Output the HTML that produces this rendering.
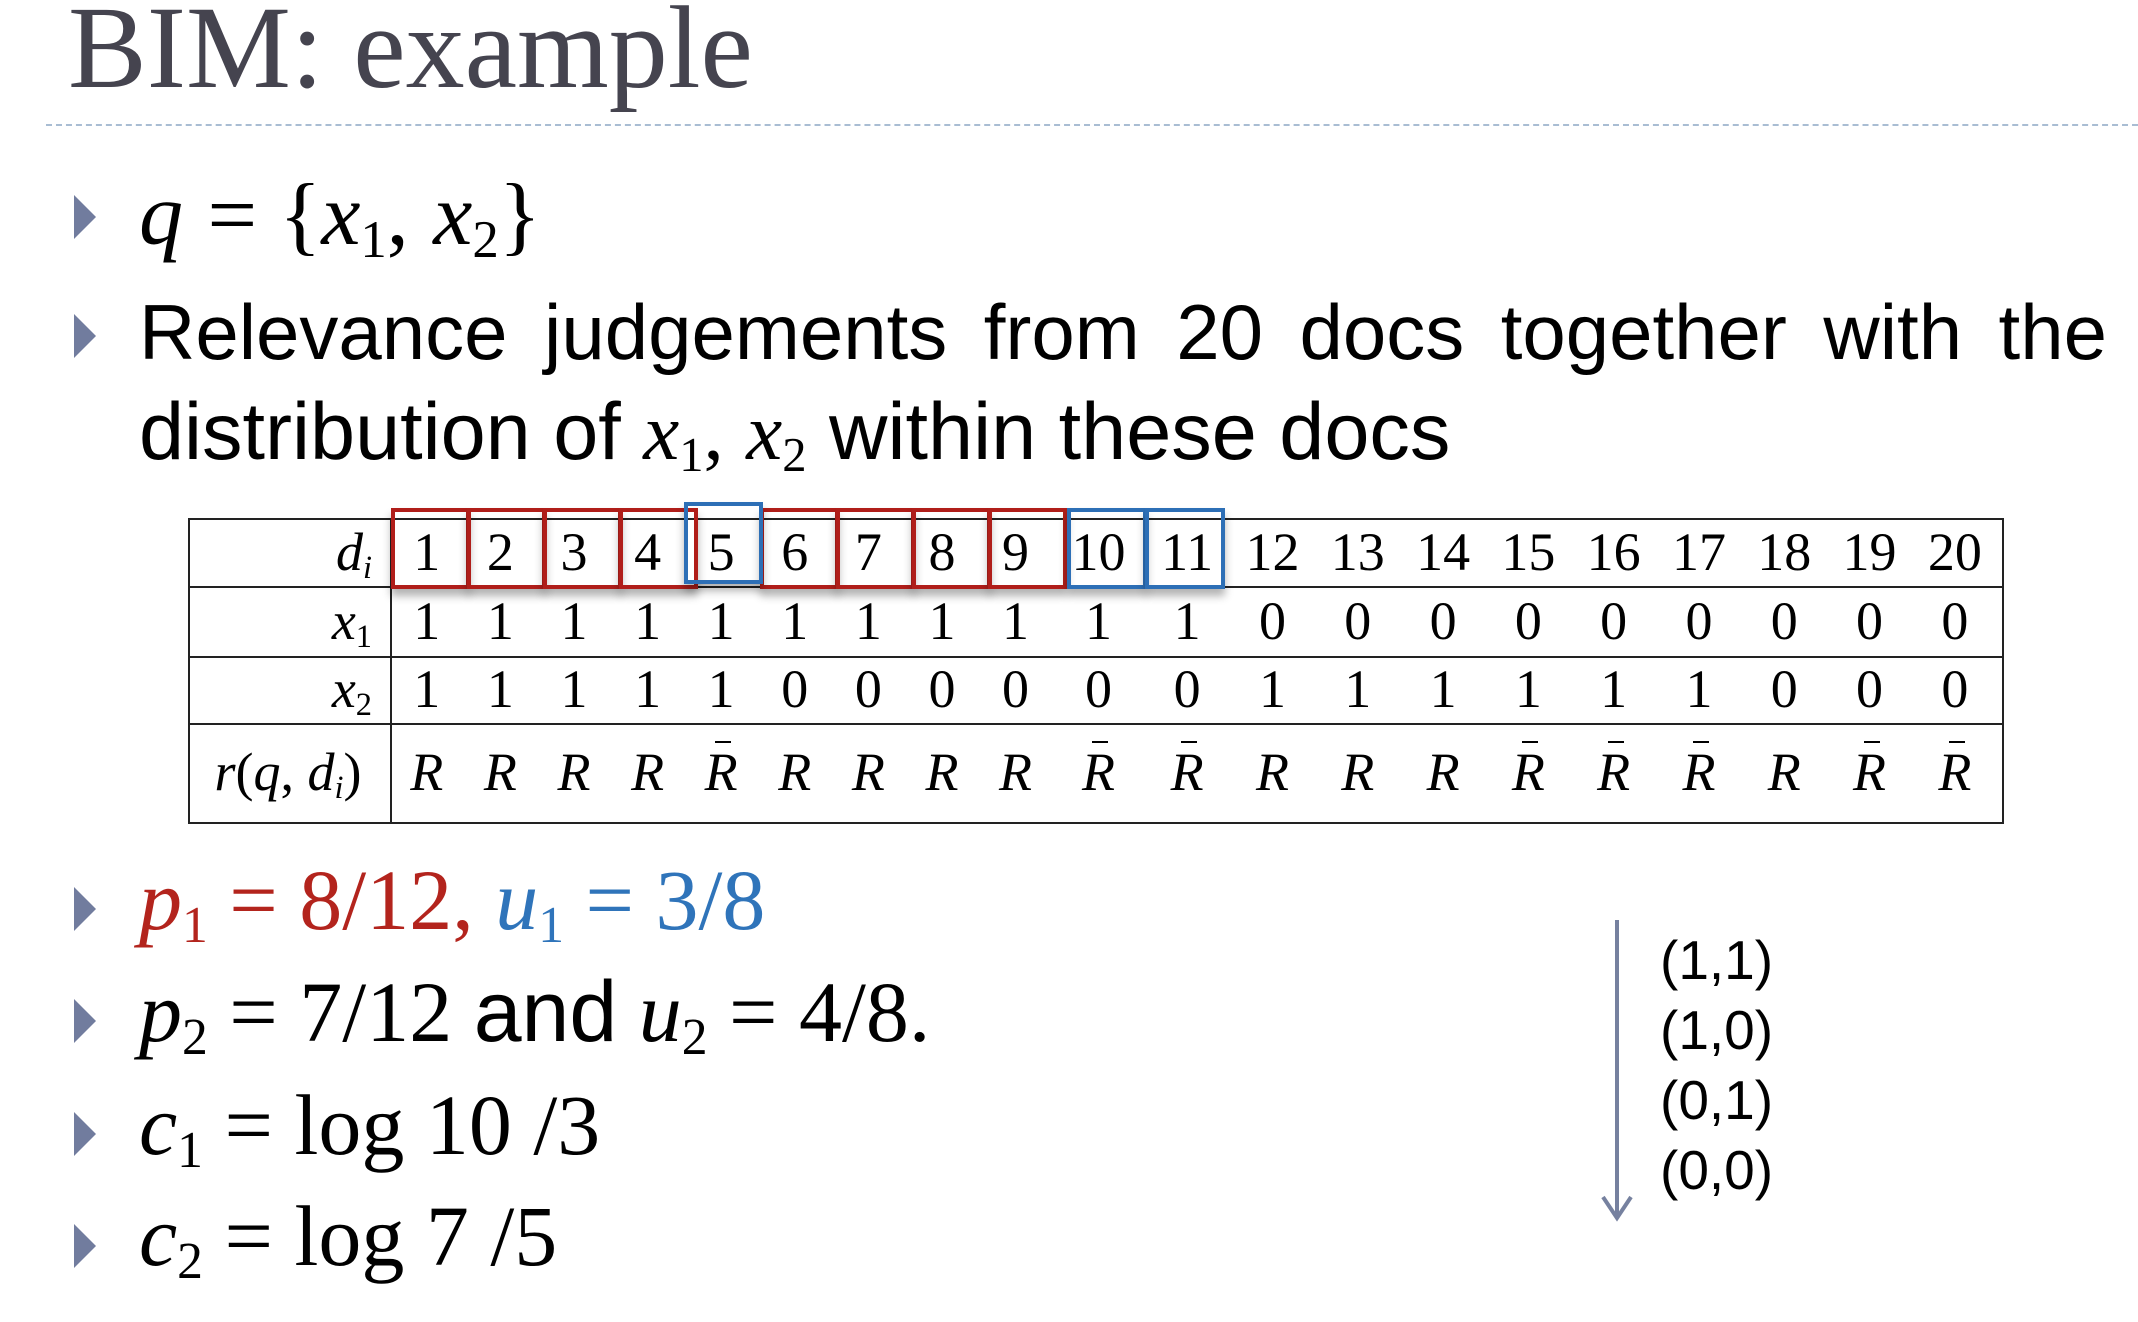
<!DOCTYPE html>
<html><head><meta charset="utf-8"><style>
body{margin:0;width:2138px;height:1322px;background:#fff;position:relative;overflow:hidden;font-family:"Liberation Sans",sans-serif;color:#000}
.a{position:absolute;line-height:1;white-space:nowrap}
.tri{position:absolute;width:0;height:0;border-top:22px solid transparent;border-bottom:22px solid transparent;border-left:22px solid #717c9e}
.m{font-family:"Liberation Serif",serif}
i{font-family:"Liberation Serif",serif;font-style:italic}
sub{font-size:0.6em;vertical-align:-0.25em;font-family:"Liberation Serif",serif}
.row{position:absolute;left:390px;display:flex;font-family:"Liberation Serif",serif;font-size:54px}
.row div{text-align:center;flex:none}
.c{width:73.6px}.c10{width:92.2px}.d{width:85.3px}
.rb{position:relative;display:inline-block;line-height:1}
.rb::before{content:"";position:absolute;left:32%;top:-4px;width:16px;border-top:2px solid #000}
.box{position:absolute;border:4px solid #b01e1a;box-shadow:0 7px 8px rgba(0,0,0,.3);box-sizing:border-box}
.bl{border-color:#2d6fb6}
</style></head><body>
<div class="a m" style="left:68px;top:-11px;font-size:118px;color:#45444f">BIM: example</div>
<div style="position:absolute;left:46px;top:124px;width:2092px;border-top:2px dashed #a9bdd3"></div>

<div class="tri" style="left:74px;top:195px"></div>
<div class="a" style="left:139px;top:170px;font-size:88px"><i>q</i> <span class="m">= {</span><i>x</i><sub>1</sub><span class="m">,</span> <i>x</i><sub>2</sub><span class="m">}</span></div>

<div class="tri" style="left:74px;top:314px"></div>
<div class="a" style="left:139px;top:293px;font-size:78px;width:1968px;text-align:justify;text-align-last:justify;white-space:normal">Relevance judgements from 20 docs together with the</div>
<div class="a" style="left:139px;top:392px;font-size:81px">distribution of <i>x</i><sub>1</sub><span class="m">,</span> <i>x</i><sub>2</sub> within these docs</div>

<!-- table -->
<div style="position:absolute;left:188px;top:518px;width:1812px;height:302px;border:2px solid #222"></div>
<div style="position:absolute;left:390px;top:518px;height:304px;border-left:2px solid #222"></div>
<div style="position:absolute;left:188px;top:586px;width:1814px;border-top:2px solid #222"></div>
<div style="position:absolute;left:188px;top:656px;width:1814px;border-top:2px solid #222"></div>
<div style="position:absolute;left:188px;top:723px;width:1814px;border-top:2px solid #222"></div>

<div class="box" style="left:391px;top:508px;width:79px;height:81px"></div>
<div class="box" style="left:467px;top:508px;width:79px;height:81px"></div>
<div class="box" style="left:543px;top:508px;width:79px;height:81px"></div>
<div class="box" style="left:619px;top:508px;width:79px;height:81px"></div>
<div class="box" style="left:760px;top:508px;width:79px;height:81px"></div>
<div class="box" style="left:836px;top:508px;width:79px;height:81px"></div>
<div class="box" style="left:912px;top:508px;width:79px;height:81px"></div>
<div class="box" style="left:988px;top:508px;width:79px;height:81px"></div>
<div class="box bl" style="left:684px;top:502px;width:79px;height:82px"></div>
<div class="box bl" style="left:1067px;top:508px;width:80px;height:81px"></div>
<div class="box bl" style="left:1145px;top:508px;width:80px;height:81px"></div>

<div class="a m" style="left:190px;top:518px;width:182px;text-align:right;line-height:68px;font-size:54px"><i>d<sub style="font-style:italic">i</sub></i></div>
<div class="a m" style="left:190px;top:586px;width:182px;text-align:right;line-height:70px;font-size:54px"><i>x</i><sub>1</sub></div>
<div class="a m" style="left:190px;top:656px;width:182px;text-align:right;line-height:67px;font-size:54px"><i>x</i><sub>2</sub></div>
<div class="a m" style="left:190px;top:723px;width:196px;text-align:center;line-height:99px;font-size:54px"><i>r</i>(<i>q</i>, <i>d<sub style="font-style:italic">i</sub></i>)</div>

<div class="row" style="top:518px;line-height:68px"><div class="c">1</div><div class="c">2</div><div class="c">3</div><div class="c">4</div><div class="c">5</div><div class="c">6</div><div class="c">7</div><div class="c">8</div><div class="c">9</div><div class="c10">10</div><div class="d">11</div><div class="d">12</div><div class="d">13</div><div class="d">14</div><div class="d">15</div><div class="d">16</div><div class="d">17</div><div class="d">18</div><div class="d">19</div><div class="d">20</div></div>
<div class="row" style="top:586px;line-height:70px"><div class="c">1</div><div class="c">1</div><div class="c">1</div><div class="c">1</div><div class="c">1</div><div class="c">1</div><div class="c">1</div><div class="c">1</div><div class="c">1</div><div class="c10">1</div><div class="d">1</div><div class="d">0</div><div class="d">0</div><div class="d">0</div><div class="d">0</div><div class="d">0</div><div class="d">0</div><div class="d">0</div><div class="d">0</div><div class="d">0</div></div>
<div class="row" style="top:656px;line-height:67px"><div class="c">1</div><div class="c">1</div><div class="c">1</div><div class="c">1</div><div class="c">1</div><div class="c">0</div><div class="c">0</div><div class="c">0</div><div class="c">0</div><div class="c10">0</div><div class="d">0</div><div class="d">1</div><div class="d">1</div><div class="d">1</div><div class="d">1</div><div class="d">1</div><div class="d">1</div><div class="d">0</div><div class="d">0</div><div class="d">0</div></div>
<div class="row" style="top:723px;line-height:99px;font-style:italic"><div class="c">R</div><div class="c">R</div><div class="c">R</div><div class="c">R</div><div class="c"><span class="rb">R</span></div><div class="c">R</div><div class="c">R</div><div class="c">R</div><div class="c">R</div><div class="c10"><span class="rb">R</span></div><div class="d"><span class="rb">R</span></div><div class="d">R</div><div class="d">R</div><div class="d">R</div><div class="d"><span class="rb">R</span></div><div class="d"><span class="rb">R</span></div><div class="d"><span class="rb">R</span></div><div class="d">R</div><div class="d"><span class="rb">R</span></div><div class="d"><span class="rb">R</span></div></div>

<!-- bottom bullets -->
<div class="tri" style="left:74px;top:887px"></div>
<div class="a m" style="left:139px;top:857px;font-size:86px"><span style="color:#b3241d"><i>p</i><sub>1</sub> = 8/12,</span> <span style="color:#2f74ba"><i>u</i><sub>1</sub> = 3/8</span></div>
<div class="tri" style="left:74px;top:999px"></div>
<div class="a m" style="left:139px;top:969px;font-size:86px"><i>p</i><sub>2</sub> = 7/12 <span style="font-family:'Liberation Sans',sans-serif">and</span> <i>u</i><sub>2</sub> = 4/8.</div>
<div class="tri" style="left:74px;top:1112px"></div>
<div class="a m" style="left:139px;top:1082px;font-size:86px"><i>c</i><sub>1</sub> = log 10 /3</div>
<div class="tri" style="left:74px;top:1224px"></div>
<div class="a m" style="left:139px;top:1193px;font-size:86px"><i>c</i><sub>2</sub> = log 7 /5</div>

<!-- arrow -->
<svg style="position:absolute;left:1595px;top:915px" width="45" height="315">
<line x1="22" y1="5" x2="22" y2="300" stroke="#76819f" stroke-width="4"/>
<polyline points="8,282 22,303 36,282" fill="none" stroke="#76819f" stroke-width="4"/>
</svg>
<div class="a" style="left:1660px;top:933px;font-size:55px">(1,1)</div>
<div class="a" style="left:1660px;top:1003px;font-size:55px">(1,0)</div>
<div class="a" style="left:1660px;top:1073px;font-size:55px">(0,1)</div>
<div class="a" style="left:1660px;top:1143px;font-size:55px">(0,0)</div>
</body></html>
